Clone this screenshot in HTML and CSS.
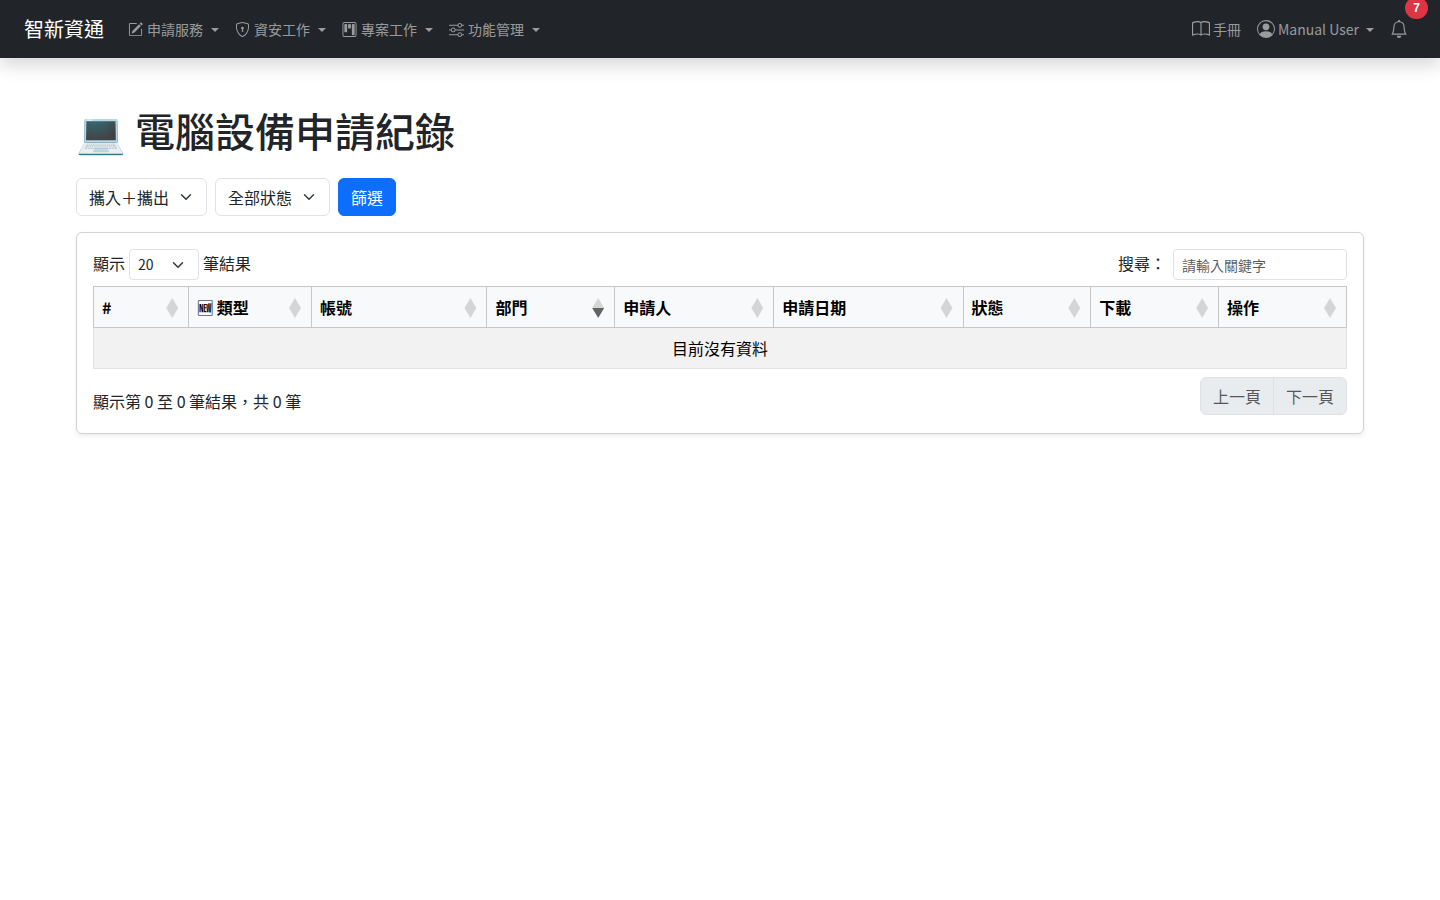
FILE: index.html
```html
<!DOCTYPE html>
<html lang="zh-Hant">
<head>
<meta charset="utf-8">
<title>電腦設備申請紀錄</title>
<link rel="stylesheet" href="styles.css">
</head>
<body>
<nav class="navbar">
  <a class="brand" href="#">智新資通</a>
  <div class="nav-menu">
    <button class="nav-item" type="button">
      <svg class="icon" viewBox="0 0 16 16"><path d="M15.502 1.94a.5.5 0 0 1 0 .706L14.459 3.69l-2-2L13.502.646a.5.5 0 0 1 .707 0l1.293 1.293zm-1.75 2.456-2-2L4.939 9.21a.5.5 0 0 0-.121.196l-.805 2.414a.25.25 0 0 0 .316.316l2.414-.805a.5.5 0 0 0 .196-.12l6.813-6.814z"/><path d="M1 13.5A1.5 1.5 0 0 0 2.5 15h11a1.500 1.500 0 0 0 1.500-1.500v-6a.5.5 0 0 0-1 0v6a.5.5 0 0 1-.5.5h-11a.5.5 0 0 1-.5-.5v-11a.5.5 0 0 1 .5-.5H9a.5.5 0 0 0 0-1H2.500A1.500 1.500 0 0 0 1 2.500z"/></svg>
      <span>申請服務</span><span class="caret"></span>
    </button>
    <button class="nav-item" type="button">
      <svg class="icon" viewBox="0 0 16 16"><path d="M5.338 1.590a61 61 0 0 0-2.837.856.48.48 0 0 0-.328.390c-.554 4.157.726 7.190 2.253 9.188a10.700 10.700 0 0 0 2.287 2.233c.346.244.652.420.893.533q.180.085.293.118a1 1 0 0 0 .101.025 1 1 0 0 0 .1-.025q.114-.034.294-.118c.240-.113.547-.290.893-.533a10.700 10.700 0 0 0 2.287-2.233c1.527-1.997 2.807-5.031 2.253-9.188a.48.48 0 0 0-.328-.390c-.651-.213-1.750-.560-2.837-.855C9.552 1.290 8.531 1.067 8 1.067c-.530 0-1.552.223-2.662.524zM5.072.560C6.157.265 7.310 0 8 0s1.843.265 2.928.560c1.110.300 2.229.655 2.887.870a1.540 1.540 0 0 1 1.044 1.262c.596 4.477-.787 7.795-2.465 9.990a11.800 11.800 0 0 1-2.517 2.453 7 7 0 0 1-1.048.625c-.280.132-.581.240-.829.240s-.548-.108-.829-.240a7 7 0 0 1-1.048-.625 11.800 11.800 0 0 1-2.517-2.453C1.928 10.487.545 7.169 1.141 2.692A1.540 1.540 0 0 1 2.185 1.430 63 63 0 0 1 5.072.560"/><path d="M9.500 6.500a1.500 1.500 0 0 1-1 1.415l.385 1.990a.5.5 0 0 1-.491.595h-.788a.5.5 0 0 1-.490-.595l.384-1.990a1.500 1.500 0 1 1 2-1.415"/></svg>
      <span>資安工作</span><span class="caret"></span>
    </button>
    <button class="nav-item" type="button">
      <svg class="icon" viewBox="0 0 16 16"><path d="M13.500 1a1 1 0 0 1 1 1v12a1 1 0 0 1-1 1h-11a1 1 0 0 1-1-1V2a1 1 0 0 1 1-1zm-11-1a2 2 0 0 0-2 2v12a2 2 0 0 0 2 2h11a2 2 0 0 0 2-2V2a2 2 0 0 0-2-2z"/><path d="M6.500 3a1 1 0 0 1 1-1h1a1 1 0 0 1 1 1v3a1 1 0 0 1-1 1h-1a1 1 0 0 1-1-1zm-4 0a1 1 0 0 1 1-1h1a1 1 0 0 1 1 1v7a1 1 0 0 1-1 1h-1a1 1 0 0 1-1-1zm8 0a1 1 0 0 1 1-1h1a1 1 0 0 1 1 1v10a1 1 0 0 1-1 1h-1a1 1 0 0 1-1-1z"/></svg>
      <span>專案工作</span><span class="caret"></span>
    </button>
    <button class="nav-item" type="button">
      <svg class="icon" viewBox="0 0 16 16"><path fill-rule="evenodd" d="M11.500 2a1.500 1.500 0 1 0 0 3 1.500 1.500 0 0 0 0-3M9.050 3a2.500 2.500 0 0 1 4.900 0H16v1h-2.050a2.500 2.500 0 0 1-4.900 0H0V3zM4.500 7a1.500 1.500 0 1 0 0 3 1.500 1.500 0 0 0 0-3M2.050 8a2.500 2.500 0 0 1 4.900 0H16v1H6.950a2.500 2.500 0 0 1-4.900 0H0V8zm9.450 4a1.500 1.500 0 1 0 0 3 1.500 1.500 0 0 0 0-3m-2.450 1a2.500 2.500 0 0 1 4.900 0H16v1h-2.050a2.500 2.500 0 0 1-4.900 0H0v-1z"/></svg>
      <span>功能管理</span><span class="caret"></span>
    </button>
  </div>
  <div class="nav-user">
    <a class="nav-item" href="#">
      <svg class="icon icon-lg" viewBox="0 0 16 16"><path d="M1 2.828c.885-.370 2.154-.769 3.388-.893 1.330-.134 2.458.063 3.112.752v9.746c-.935-.530-2.120-.603-3.213-.493-1.180.120-2.370.461-3.287.811zm7.500-.141c.654-.689 1.782-.886 3.112-.752 1.234.124 2.503.523 3.388.893v9.923c-.918-.350-2.107-.692-3.287-.810-1.094-.111-2.278-.039-3.213.492zM8 1.783C7.015.936 5.587.810 4.287.940c-1.514.153-3.042.672-3.994 1.105A.5.5 0 0 0 0 2.500v11a.5.5 0 0 0 .707.455c.882-.400 2.303-.881 3.680-1.020 1.409-.142 2.590.087 3.223.877a.5.5 0 0 0 .780 0c.633-.790 1.814-1.019 3.222-.877 1.378.139 2.800.620 3.681 1.020A.5.5 0 0 0 16 13.500v-11a.5.5 0 0 0-.293-.455c-.952-.433-2.480-.952-3.994-1.105C10.413.809 8.985.936 8 1.783"/></svg>
      <span>手冊</span>
    </a>
    <button class="nav-item" type="button">
      <svg class="icon icon-lg" viewBox="0 0 16 16"><path d="M11 6a3 3 0 1 1-6 0 3 3 0 0 1 6 0"/><path fill-rule="evenodd" d="M0 8a8 8 0 1 1 16 0A8 8 0 0 1 0 8m8-7a7 7 0 0 0-5.468 11.370C3.242 11.226 4.805 10 8 10s4.757 1.225 5.468 2.370A7 7 0 0 0 8 1"/></svg>
      <span>Manual User</span><span class="caret"></span>
    </button>
    <button class="nav-item" type="button" aria-label="通知">
      <svg class="icon icon-lg" viewBox="0 0 16 16"><path d="M8 16a2 2 0 0 0 2-2H6a2 2 0 0 0 2 2M8 1.918l-.797.161A4 4 0 0 0 4 6c0 .628-.134 2.197-.459 3.742-.160.767-.376 1.566-.663 2.258h10.244c-.287-.692-.502-1.490-.663-2.258C12.134 8.197 12 6.628 12 6a4 4 0 0 0-3.203-3.920zM14.220 12c.223.447.481.801.780 1H1c.299-.199.557-.553.780-1C2.680 10.200 3 6.880 3 6c0-2.420 1.720-4.440 4.005-4.901a1 1 0 1 1 1.990 0A5 5 0 0 1 13 6c0 .880.320 4.200 1.220 6"/></svg>
      <span class="badge">7</span>
    </button>
  </div>
</nav>

<main class="container">
  <h1 class="title">💻 電腦設備申請紀錄</h1>
  <form class="filters">
    <select class="select" aria-label="類型"><option>攜入＋攜出</option></select>
    <select class="select" aria-label="狀態"><option>全部狀態</option></select>
    <button class="btn" type="button">篩選</button>
  </form>

  <section class="card">
    <div class="tools">
      <label class="length"><span class="label">顯示</span> <select class="select select-sm"><option>20</option></select> <span class="label">筆結果</span></label>
      <label class="search"><span class="label">搜尋：</span> <input class="input" type="search" placeholder="請輸入關鍵字"></label>
    </div>
    <table class="table">
      <colgroup>
        <col class="col-id"><col class="col-type"><col class="col-account"><col class="col-action"><col class="col-person"><col class="col-date"><col class="col-action"><col class="col-action"><col class="col-action">
      </colgroup>
      <thead>
        <tr>
          <th><button class="sort" type="button">#</button></th>
          <th><button class="sort" type="button">🆕 類型</button></th>
          <th><button class="sort" type="button">帳號</button></th>
          <th aria-sort="descending"><button class="sort sort-desc" type="button">部門</button></th>
          <th><button class="sort" type="button">申請人</button></th>
          <th><button class="sort" type="button">申請日期</button></th>
          <th><button class="sort" type="button">狀態</button></th>
          <th><button class="sort" type="button">下載</button></th>
          <th><button class="sort" type="button">操作</button></th>
        </tr>
      </thead>
      <tbody>
        <tr><td class="empty" colspan="9">目前沒有資料</td></tr>
      </tbody>
    </table>
    <div class="footer">
      <div class="info">顯示第 0 至 0 筆結果，共 0 筆</div>
      <div class="pager">
        <button class="page" type="button" disabled>上一頁</button>
        <button class="page" type="button" disabled>下一頁</button>
      </div>
    </div>
  </section>
</main>
</body>
</html>
```
FILE: styles.css
```css
*, *::before, *::after { box-sizing: border-box; }

body {
  margin: 0;
  background: #fff;
  color: #212529;
  font-family: "Noto Sans CJK TC", "Liberation Sans", sans-serif;
  font-size: 16px;
  line-height: 24px;
}

button, input, select { margin: 0; font: inherit; color: inherit; }

.navbar {
  display: flex;
  align-items: center;
  height: 58px;
  padding: 0 24px;
  background: #212529;
  box-shadow: 0 8px 16px rgba(0, 0, 0, .15);
}
.brand {
  margin-right: 16px;
  color: #fff;
  font-size: 20px;
  line-height: 30px;
  text-decoration: none;
}
.nav-menu, .nav-user { display: flex; align-items: center; }
.nav-user { margin-left: auto; }
.nav-item {
  position: relative;
  display: flex;
  align-items: center;
  gap: 4px;
  padding: 8px;
  border: 0;
  background: none;
  color: rgba(255, 255, 255, .55);
  font-size: 14px;
  line-height: 22px;
  text-decoration: none;
}
.nav-user .nav-item { gap: 3px; }
.icon { width: 15px; height: 15px; fill: currentColor; }
.icon-lg { width: 18px; height: 18px; }
.caret {
  margin: 1px 0 0 4px;
  border-top: 4px solid;
  border-right: 4px solid transparent;
  border-left: 4px solid transparent;
}
.badge {
  position: absolute;
  top: -15px;
  right: -12px;
  padding: 4px 8px;
  border-radius: 11px;
  background: #dc3545;
  color: #fff;
  font: bold 12px/14px "Liberation Sans", sans-serif;
}

.container { max-width: 1320px; margin: 0 auto; padding: 48px 16px 16px; }
.title { margin: 0 0 24px; font-size: 40px; font-weight: 500; line-height: 48px; }

.filters { display: flex; gap: 8px; margin-bottom: 16px; }
.select {
  padding: 6px 36px 6px 12px;
  border: 1px solid #dee2e6;
  border-radius: 6px;
  appearance: none;
  background: #fff url("data:image/svg+xml,%3csvg xmlns='http://www.w3.org/2000/svg' viewBox='0 0 16 16'%3e%3cpath fill='none' stroke='%23343a40' stroke-linecap='round' stroke-linejoin='round' stroke-width='2' d='m2 5 6 6 6-6'/%3e%3c/svg%3e") no-repeat right 12px center / 16px 12px;
}
.select-sm {
  width: 70px;
  height: 31px;
  padding: 4px 36px 4px 8px;
  border-radius: 4px;
  font-size: 14px;
  line-height: 21px;
}
.btn {
  padding: 6px 12px;
  border: 1px solid #0d6efd;
  border-radius: 6px;
  background: #0d6efd;
  color: #fff;
}

.card {
  padding: 16px;
  border: 1px solid rgba(0, 0, 0, .175);
  border-radius: 6px;
  box-shadow: 0 2px 4px rgba(0, 0, 0, .075);
}
.tools { display: flex; justify-content: space-between; margin-bottom: 6px; }
.length, .search { display: flex; align-items: center; gap: 4px; }
.search { gap: 7px; }
.label { padding-bottom: 3px; }
.input {
  width: 174px;
  height: 31px;
  padding: 4px 8px;
  border: 1px solid #dee2e6;
  border-radius: 4px;
  background: #fff;
  font-size: 14px;
  line-height: 21px;
  appearance: none;
}
.input::placeholder { color: rgba(33, 37, 41, .75); }

.table { width: 100%; table-layout: fixed; border-collapse: collapse; color: #000; }
.col-id { width: 7.6%; }
.col-type { width: 9.8%; }
.col-account { width: 14%; }
.col-person { width: 12.7%; }
.col-date { width: 15.1%; }
.col-action { width: 10.2%; }
.table th { padding: 0; border: 1px solid #c6c7c8; background: #f8f9fa; }
.sort {
  position: relative;
  display: block;
  width: 100%;
  padding: 8px;
  border: 0;
  background: none;
  font-weight: 700;
  text-align: left;
}
.sort::before, .sort::after {
  content: "";
  position: absolute;
  right: 10px;
  width: 12px;
  height: 10px;
  background: #000;
  opacity: .14;
}
.sort::before { top: 11px; clip-path: polygon(50% 0, 100% 100%, 0 100%); }
.sort::after { top: 21px; clip-path: polygon(0 0, 100% 0, 50% 100%); }
.sort-desc::after { opacity: .6; }
.empty { padding: 8px; border: 1px solid #dee2e6; background: #f2f2f2; text-align: center; }

.footer { display: flex; justify-content: space-between; margin-top: 8px; }
.info { padding-top: 12px; }
.pager { display: flex; margin-bottom: 2px; }
.page {
  padding: 6px 12px;
  border: 1px solid #dee2e6;
  border-radius: 6px 0 0 6px;
  background: #e9ecef;
  color: rgba(33, 37, 41, .75);
}
.page + .page { margin-left: -1px; border-radius: 0 6px 6px 0; }
```
